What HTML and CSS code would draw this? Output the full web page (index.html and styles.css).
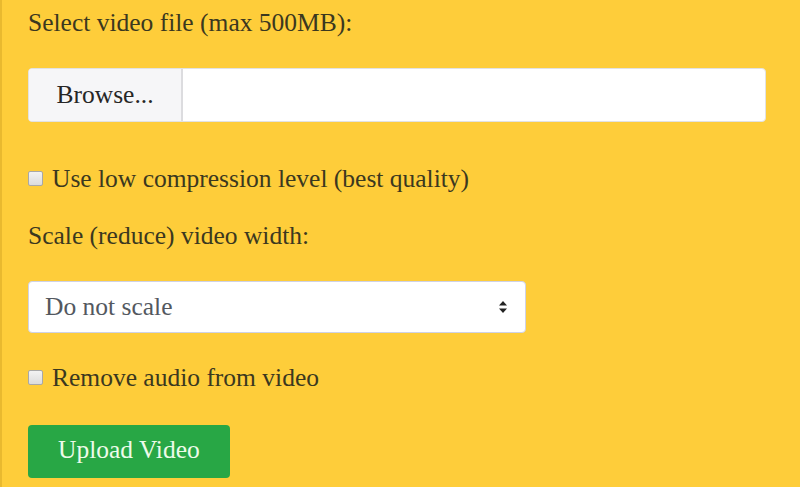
FILE: index.html
```html
<!DOCTYPE html>
<html lang="en">
<head>
    <meta charset="UTF-8">
    <meta name="viewport" content="width=device-width, initial-scale=1.0">
    <title>Video Compressor</title>
    <link rel="stylesheet" href="styles.css">
</head>
<body>

<form class="upload-form" onsubmit="return false">
    <label class="field-label" for="videoFile">Select video file (max 500MB):</label>

    <div class="file-input">
        <span class="file-browse">Browse...</span>
        <span class="file-name"></span>
    </div>

    <label class="check-row">
        <input type="checkbox" class="check-box">
        <span>Use low compression level (best quality)</span>
    </label>

    <label class="field-label" for="scale">Scale (reduce) video width:</label>

    <div class="select-wrap">
        <div class="select-box" id="scale">Do not scale</div>
        <svg class="select-arrow" width="10" height="14" viewBox="0 0 10 14">
            <path d="M1 5.5 L5 1 L9 5.5 Z" fill="#222"/>
            <path d="M1 8.5 L5 13 L9 8.5 Z" fill="#222"/>
        </svg>
    </div>

    <label class="check-row check-row-last">
        <input type="checkbox" class="check-box">
        <span>Remove audio from video</span>
    </label>

    <button type="submit" class="upload-btn">Upload Video</button>
</form>

</body>
</html>
```

FILE: styles.css
```css
body {
    margin: 0;
    height: 487px;
    overflow: hidden;
    background-color: #fecd3a;
    border-left: 2px solid #e9b92f;
    font-family: "Liberation Serif", serif;
    font-size: 25.5px;
    line-height: 34px;
    color: #3b381f;
}
.upload-form {
    padding: 6px 34px 0 26px;
    display: flex;
    flex-direction: column;
    align-items: flex-start;
}
.field-label {
    display: block;
}
.file-input {
    align-self: stretch;
    display: flex;
    height: 54px;
    box-sizing: border-box;
    margin-top: 28px;
    background: #fff;
    border: 1px solid #e2e2e2;
    border-radius: 4px;
    overflow: hidden;
}
.file-browse {
    width: 152px;
    padding: 9px 0;
    text-align: center;
    background-color: #f6f6f8;
    border-right: 2px solid #dcdcdf;
    color: #262626;
}
.file-name {
    flex: 1;
}
.check-row {
    display: flex;
    align-items: flex-start;
    margin-top: 40px;
    margin-bottom: 23px;
}
.check-row-last {
    margin-top: 28px;
    margin-bottom: 30px;
}
.check-box {
    appearance: none;
    -webkit-appearance: none;
    width: 15px;
    height: 15px;
    margin: 9px 9px 0 0;
    box-sizing: border-box;
    border: 1px solid #a8a8a8;
    border-radius: 2px;
    background: linear-gradient(#f2f2f2, #dcdcdc);
}
.select-wrap {
    position: relative;
    width: 498px;
    margin-top: 28px;
}
.select-box {
    height: 52px;
    box-sizing: border-box;
    padding: 8px 16px;
    background: #fff;
    border: 1px solid #cfd2e6;
    border-radius: 4px;
    color: #535860;
}
.select-arrow {
    position: absolute;
    right: 18px;
    top: 19px;
}
.upload-btn {
    font-family: inherit;
    font-size: 25.5px;
    line-height: 34px;
    padding: 8px 30px 11px;
    border: none;
    border-radius: 4px;
    background-color: #28a745;
    color: #edfbe9;
    cursor: pointer;
}
```
